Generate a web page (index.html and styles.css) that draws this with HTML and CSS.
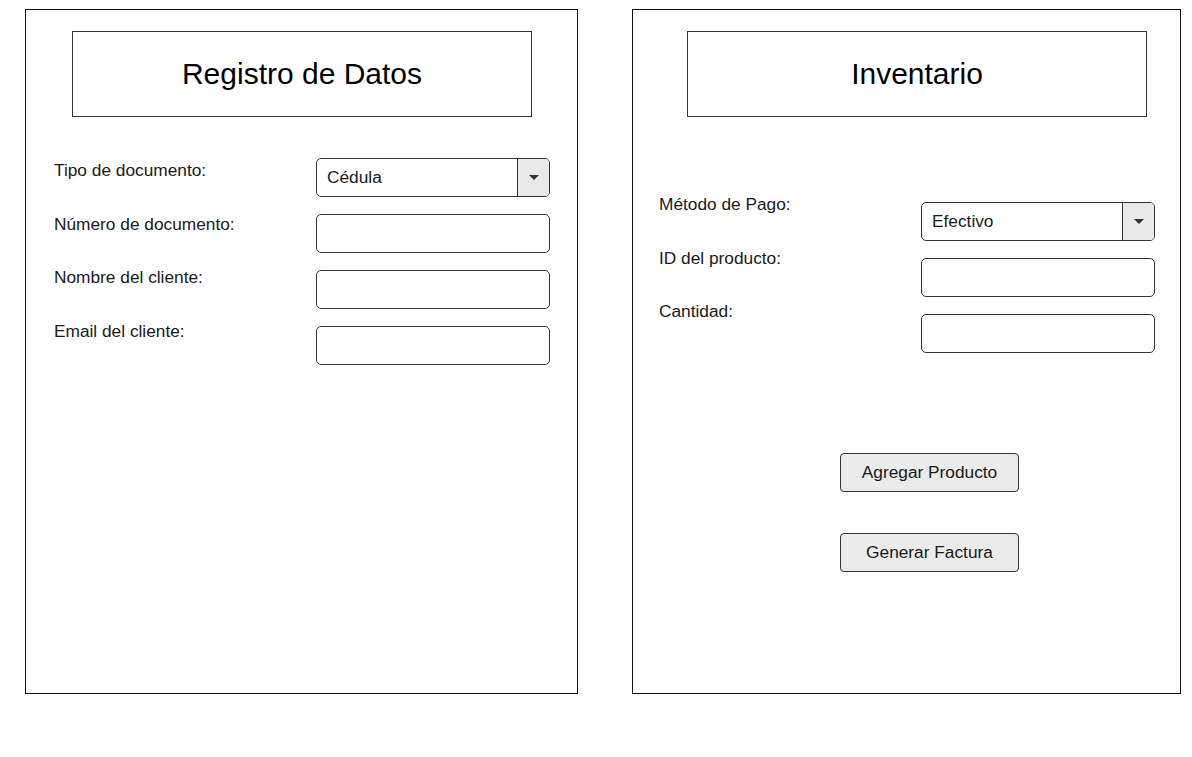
FILE: index.html
```html
<!DOCTYPE html>
<html lang="es">
<head>
<meta charset="utf-8">
<title>Registro</title>
<link rel="stylesheet" href="styles.css">
</head>
<body>
<div class="page">
  <section class="panel panel-left">
    <div class="title-box">Registro de Datos</div>
    <div class="form form-left">
      <div class="labels">
        <div class="label">Tipo de documento:</div>
        <div class="label">Número de documento:</div>
        <div class="label">Nombre del cliente:</div>
        <div class="label">Email del cliente:</div>
      </div>
      <div class="fields">
        <div class="select"><span class="select-value">Cédula</span><span class="select-btn"><span class="caret"></span></span></div>
        <div class="input"></div>
        <div class="input"></div>
        <div class="input"></div>
      </div>
    </div>
  </section>
  <section class="panel panel-right">
    <div class="title-box title-right">Inventario</div>
    <div class="form form-right">
      <div class="labels">
        <div class="label">Método de Pago:</div>
        <div class="label">ID del producto:</div>
        <div class="label">Cantidad:</div>
      </div>
      <div class="fields">
        <div class="select"><span class="select-value">Efectivo</span><span class="select-btn"><span class="caret"></span></span></div>
        <div class="input"></div>
        <div class="input"></div>
      </div>
    </div>
    <div class="buttons">
      <div class="btn">Agregar Producto</div>
      <div class="btn">Generar Factura</div>
    </div>
  </section>
</div>
</body>
</html>
```
FILE: styles.css
```css
* { box-sizing: border-box; }
html, body { margin: 0; padding: 0; background: #fff; }
body {
  font-family: "Liberation Sans", Arial, sans-serif;
  color: #1a1a1a;
  width: 1192px;
  height: 757px;
  overflow: hidden;
}
.page {
  display: flex;
  gap: 54px;
  padding: 9px 0 0 25px;
}
.panel {
  height: 685px;
  border: 1px solid #111;
  padding-top: 21px;
}
.panel-left { width: 553px; }
.panel-right { width: 549px; }
.title-box {
  width: 460px;
  height: 86px;
  margin-left: 46px;
  border: 1px solid #333;
  display: flex;
  align-items: center;
  justify-content: center;
  font-size: 30px;
  color: #000;
  padding-bottom: 0;
}
.title-right { margin-left: 54px; }
.form { display: flex; }
.form-left { margin-top: 41px; padding-left: 28px; }
.form-right { margin-top: 85px; padding-left: 26px; }
.labels {
  display: flex;
  flex-direction: column;
  gap: 33.5px;
  width: 262px;
}
.form-left .labels { padding-top: 2px; }
.form-right .labels { margin-top: -8px; }
.label {
  font-size: 17.3px;
  line-height: 20px;
  height: 20px;
  color: #1a1a1a;
}
.fields {
  display: flex;
  flex-direction: column;
  gap: 17px;
}
.input, .select {
  width: 234px;
  height: 39px;
  border: 1px solid #333;
  border-radius: 5px;
  background: #fff;
}
.select {
  display: flex;
  overflow: hidden;
}
.select-value {
  flex: 1;
  font-size: 17.3px;
  line-height: 37px;
  padding-left: 10px;
  color: #1a1a1a;
}
.select-btn {
  width: 32px;
  background: #e9e9e9;
  border-left: 1px solid #333;
  display: flex;
  align-items: center;
  justify-content: center;
}
.caret {
  width: 0;
  height: 0;
  border-left: 5px solid transparent;
  border-right: 5px solid transparent;
  border-top: 5px solid #333;
}
.buttons {
  display: flex;
  flex-direction: column;
  gap: 41px;
  margin-top: 100px;
  padding-left: 207px;
}
.btn {
  width: 179px;
  height: 39px;
  border: 1px solid #333;
  border-radius: 4px;
  background: #ebebeb;
  font-size: 17.3px;
  line-height: 36px;
  text-align: center;
  color: #1a1a1a;
}
```
